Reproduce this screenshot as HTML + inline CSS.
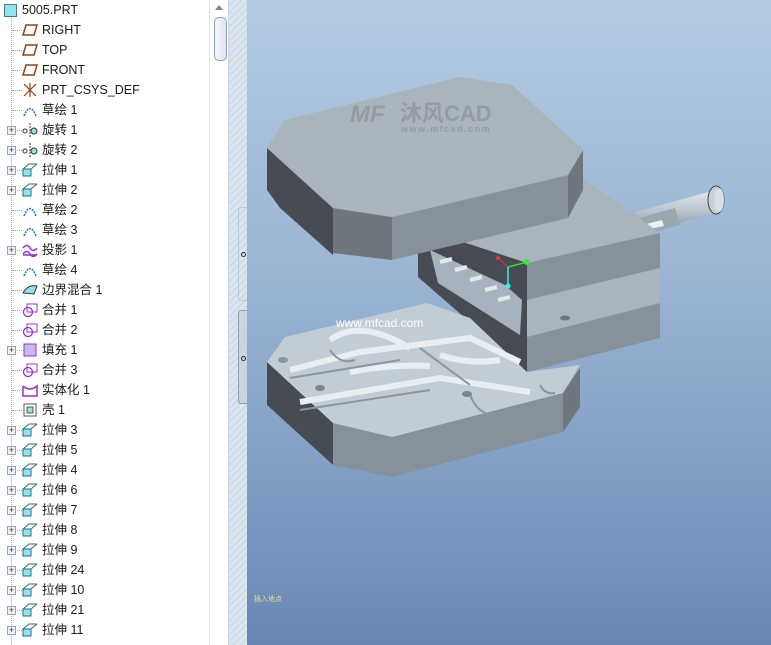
<!DOCTYPE html>
<html><head><meta charset="utf-8"><style>
html,body{margin:0;padding:0;width:771px;height:645px;overflow:hidden;background:#fff;font-family:"Liberation Sans","Noto Sans CJK SC",sans-serif;}
#tree{position:absolute;left:0;top:0;width:209px;height:645px;background:#fff;}
.row{position:absolute;left:0;height:20px;font-size:12.5px;color:#1a1a1a;line-height:20px;white-space:nowrap;}
.row span.t{position:absolute;left:42px;top:0;}
.ic{position:absolute;left:22px;top:3px;width:16px;height:14px;}
.pl{position:absolute;left:7px;top:6px;width:7px;height:7px;border:1px solid #8fa5bb;background:#eef2f6;font-size:9px;line-height:7px;text-align:center;color:#333;}
.vline{position:absolute;left:11px;top:18px;width:0;height:627px;border-left:1px dotted #aaa;}
.hl{position:absolute;left:12px;top:10px;width:10px;border-top:1px dotted #aaa;}
#sb{position:absolute;left:209px;top:0;width:20px;height:645px;background:#fff;border-left:1px solid #dfe6ee;border-right:1px solid #c9d6e2;box-sizing:border-box;}
#thumb{position:absolute;left:4px;top:17px;width:11px;height:42px;border:1px solid #8ea4ba;border-radius:5px;background:linear-gradient(90deg,#f3f6f9,#dce5ee);}
#sep{position:absolute;left:229px;top:0;width:18px;height:645px;background:repeating-linear-gradient(135deg,#dce6ef 0 3px,#cfdbe7 3px 5px);}
#vp{position:absolute;left:247px;top:0;width:524px;height:645px;background:linear-gradient(180deg,#b4cbe2 0%,#9cb6d4 40%,#809dc4 75%,#6886b0 100%);}
</style></head><body>
<div id="tree">
<div class="vline"></div>
<div class="row" style="top:0"><div style="position:absolute;left:4px;top:4px;width:11px;height:11px;background:#8fe3ea;border:1px solid #4a7a88;"></div><span class="t" style="left:22px">5005.PRT</span></div>
</div>
<div id="sb"><div style="position:absolute;left:5px;top:5px;width:0;height:0;border-left:4px solid transparent;border-right:4px solid transparent;border-bottom:5px solid #6a88a8;"></div><div id="thumb"></div></div>
<div id="sep">
<div style="position:absolute;left:9px;top:207px;width:9px;height:92px;border:1px solid #b7cce0;border-right:none;border-radius:3px 0 0 3px;"></div>
<div style="position:absolute;left:12px;top:252px;width:3px;height:3px;border:1px solid #333;border-radius:50%"></div>
<div style="position:absolute;left:9px;top:310px;width:9px;height:92px;border:1px solid #8e9eae;border-right:none;border-radius:3px 0 0 3px;background:#c8d5e1"></div>
<div style="position:absolute;left:12px;top:356px;width:3px;height:3px;border:1px solid #333;border-radius:50%"></div>
</div>
<div id="vp">
<svg width="524" height="645" viewBox="247 0 524 645" style="position:absolute;left:0;top:0">
<defs><linearGradient id="cy" x1="0" y1="0" x2="0" y2="1"><stop offset="0" stop-color="#dfe6ec"/><stop offset="0.5" stop-color="#b7c2cc"/><stop offset="1" stop-color="#7d8892"/></linearGradient></defs>
<!-- pin -->
<polygon points="636,212 712,191 717,211 645,234" fill="url(#cy)"/>
<polygon points="640,218 675,208 680,225 650,233" fill="#9aa6b1"/>
<polygon points="646,224 662,220 664,226 650,229" fill="#e8eef3"/>
<ellipse cx="716" cy="200" rx="8" ry="14" fill="#c9d2da" stroke="#444" stroke-width="1"/>
<ellipse cx="719" cy="200" rx="5" ry="12" fill="#d8e0e6"/>
<!-- middle upper block -->
<polygon points="557,160 660,233 527,263 463,242 510,200" fill="#a9b4bc"/>
<polygon points="527,263 660,233 660,268 527,300" fill="#87919a"/>
<polygon points="463,242 527,263 527,300 500,290" fill="#474c54"/>
<polygon points="418,243 463,242 527,300 527,372 418,277" fill="#474c54"/>
<polygon points="430,250 505,285 522,300 520,335 438,283" fill="#a6b2bd"/>
<path d="M440,262 l12,-3 M455,270 l12,-3 M470,280 l12,-3 M485,290 l12,-3 M498,300 l12,-3" stroke="#e2e8ee" stroke-width="4"/>
<polygon points="527,300 660,268 660,303 527,337" fill="#a9b4bc"/>
<polygon points="527,337 660,303 660,338 527,372" fill="#87919a"/>
<ellipse cx="565" cy="318" rx="5" ry="2.5" fill="#6f7880"/>
<!-- top plate -->
<polygon points="267,148 333,208 333,255 280,208 267,190" fill="#474c54"/>
<polygon points="333,208 392,217 392,260 333,253" fill="#6f767e"/>
<polygon points="392,217 568,175 568,218 392,260" fill="#87919a"/>
<polygon points="568,175 583,150 583,190 568,218" fill="#6f767e"/>
<polygon points="285,120 460,77 512,85 583,150 568,175 392,217 333,208 267,148" fill="#a9b4bc"/>
<!-- bottom plate -->
<polygon points="267,362 333,423 333,465 267,405" fill="#474c54"/>
<polygon points="333,423 392,437 392,477 333,465" fill="#87919a"/>
<polygon points="392,437 563,393 563,432 392,477" fill="#87919a"/>
<polygon points="563,393 580,368 580,407 563,432" fill="#6f767e"/>
<polygon points="267,362 285,337 427,303 470,318 527,372 580,365 563,393 392,437 333,423" fill="#c2ccd4"/>
<path d="M290,370 L360,352 L470,338 L520,362 M300,402 L440,378 L530,392 M330,340 q30,-22 80,8 M440,355 q30,10 60,5 M350,372 q40,-8 80,-6" stroke="#e8eef2" stroke-width="6" fill="none"/>
<path d="M290,378 L400,360 M300,410 L430,390 M420,348 L470,385 M330,350 q10,15 25,10 M470,395 q8,20 25,20 M540,385 q5,10 15,8" stroke="#8a96a2" stroke-width="2" fill="none"/>
<ellipse cx="320" cy="388" rx="5" ry="3" fill="#7b858f"/>
<ellipse cx="467" cy="394" rx="5" ry="3" fill="#7b858f"/>
<ellipse cx="283" cy="360" rx="5" ry="3" fill="#8a96a2"/>
<!-- axes -->
<line x1="508" y1="267" x2="498" y2="258" stroke="#e33" stroke-width="1"/>
<line x1="508" y1="267" x2="527" y2="262" stroke="#3d3" stroke-width="1.5"/>
<line x1="508" y1="267" x2="508" y2="286" stroke="#3ee" stroke-width="1.5"/>
<circle cx="498" cy="258" r="2" fill="#e33"/><circle cx="527" cy="262" r="3" fill="#3e3"/><circle cx="508" cy="286" r="2.5" fill="#3ee"/>
<text x="350" y="122" font-family="Liberation Sans" font-weight="bold" font-style="italic" font-size="24" fill="#8f969c" opacity="0.8">MF</text>
<text x="400" y="121" font-family="Liberation Sans,Noto Sans CJK SC,sans-serif" font-weight="bold" font-size="22" fill="#8f969c" opacity="0.8">沐风CAD</text>
<text x="401" y="132" font-family="Liberation Sans" font-weight="bold" font-size="9" letter-spacing="1.5" fill="#8f969c" opacity="0.8">www.mfcad.com</text>
<text x="336" y="327" font-family="Liberation Sans" font-size="12" fill="#ffffff">www.mfcad.com</text>
<text x="254" y="601" font-family="Noto Sans CJK SC,sans-serif" font-size="7" fill="#e8dca0">插入地点</text>
</svg>
</div>
<script>
var items=[["RIGHT","pl"],["TOP","pl"],["FRONT","pl"],["PRT_CSYS_DEF","cs"],["草绘 1","sk"],["旋转 1","rv",1],["旋转 2","rv",1],["拉伸 1","ex",1],["拉伸 2","ex",1],["草绘 2","sk"],["草绘 3","sk"],["投影 1","pj",1],["草绘 4","sk"],["边界混合 1","bb"],["合并 1","mg"],["合并 2","mg"],["填充 1","fl",1],["合并 3","mg"],["实体化 1","so"],["壳 1","sh"],["拉伸 3","ex",1],["拉伸 5","ex",1],["拉伸 4","ex",1],["拉伸 6","ex",1],["拉伸 7","ex",1],["拉伸 8","ex",1],["拉伸 9","ex",1],["拉伸 24","ex",1],["拉伸 10","ex",1],["拉伸 21","ex",1],["拉伸 11","ex",1]];
var ic={pl:'<svg class="ic" viewBox="0 0 16 14"><polygon points="4,2 15,2 12,12 1,12" fill="none" stroke="#8b4513" stroke-width="1.5"/></svg>',
cs:'<svg class="ic" viewBox="0 0 16 14"><path d="M2,1 L14,13 M14,1 L2,13 M8,0 L8,14" stroke="#8b4513" stroke-width="1.2"/></svg>',
sk:'<svg class="ic" viewBox="0 0 16 14"><path d="M2,13 Q8,-2 14,13" stroke="#1a6fe0" stroke-width="1.5" fill="none" stroke-dasharray="2,1"/></svg>',
rv:'<svg class="ic" viewBox="0 0 16 14"><circle cx="3" cy="8" r="2" fill="none" stroke="#333"/><circle cx="12" cy="8" r="3" fill="#8fe3ea" stroke="#333"/><path d="M8,0 L8,14" stroke="#333" stroke-dasharray="2,1"/></svg>',
ex:'<svg class="ic" viewBox="0 0 16 14"><rect x="1" y="6" width="8" height="7" fill="#8fe3ea" stroke="#2a6a7a"/><path d="M9,6 L15,1 M1,6 L7,1 L15,1" stroke="#2a6a7a" fill="none"/></svg>',
pj:'<svg class="ic" viewBox="0 0 16 14"><path d="M1,5 Q5,0 8,5 T15,5 M1,11 Q5,6 8,11 T15,11 M1,12 L15,12" stroke="#9b30d0" stroke-width="1.5" fill="none"/></svg>',
bb:'<svg class="ic" viewBox="0 0 16 14"><path d="M1,10 Q6,1 15,3 L12,11 Z" fill="#8fe3ea" stroke="#333"/></svg>',
mg:'<svg class="ic" viewBox="0 0 16 14"><rect x="5" y="1" width="10" height="8" fill="#fff" stroke="#9b30d0"/><circle cx="6" cy="9" r="4.5" fill="none" stroke="#9b30d0" stroke-width="1.3"/></svg>',
fl:'<svg class="ic" viewBox="0 0 16 14"><rect x="2" y="1" width="12" height="12" fill="#c8b8f0" stroke="#9b30d0"/></svg>',
so:'<svg class="ic" viewBox="0 0 16 14"><path d="M1,3 L1,13 L15,13 L15,3 Q8,9 1,3" fill="none" stroke="#9b30d0" stroke-width="1.5"/></svg>',
sh:'<svg class="ic" viewBox="0 0 16 14"><rect x="2" y="1" width="12" height="12" fill="#fff" stroke="#555"/><rect x="5" y="4" width="6" height="6" fill="#8fe3ea" stroke="#555"/></svg>'};
var h='';items.forEach(function(it,i){var y=20+i*20;h+='<div class="row" style="top:'+y+'px;width:209px"><div class="hl"></div>'+(it[2]?'<div class="pl">+</div>':'')+ic[it[1]]+'<span class="t">'+it[0]+'</span></div>';});
document.getElementById('tree').insertAdjacentHTML('beforeend',h);
</script>
</body></html>
